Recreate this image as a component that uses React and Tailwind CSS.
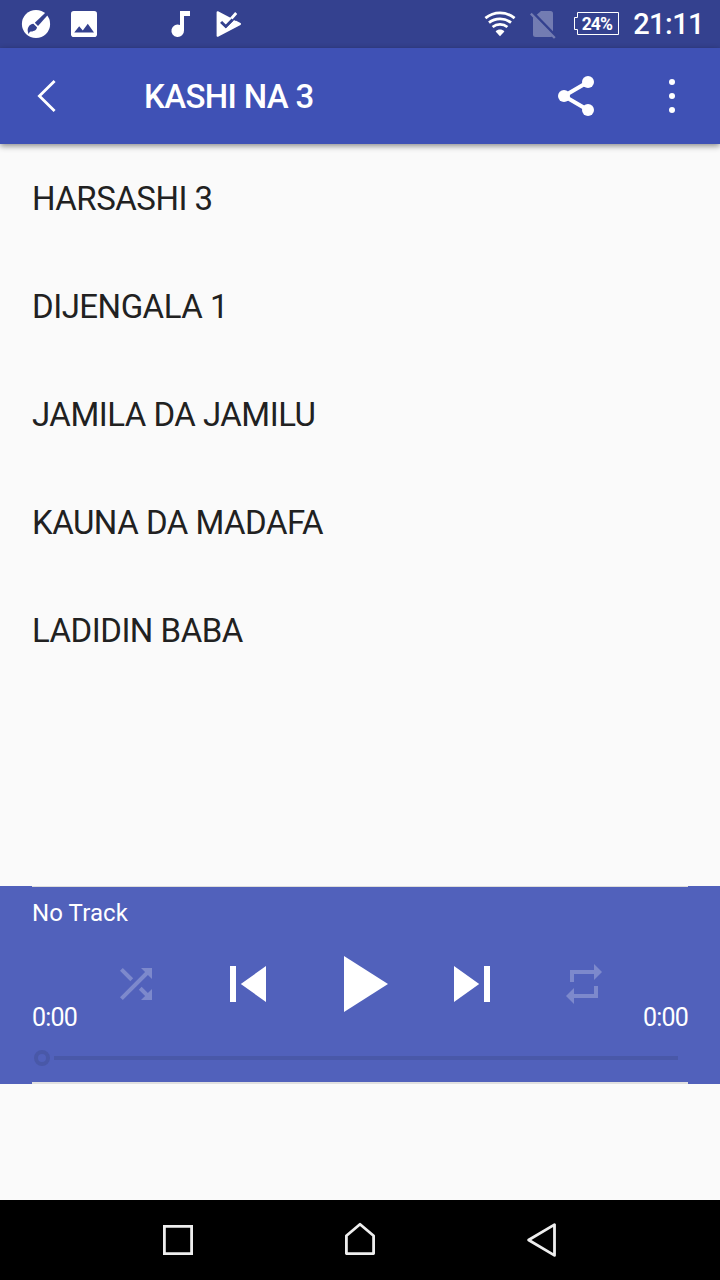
import React from "react";

const tracks = [
    "HARSASHI 3",
    "DIJENGALA 1",
    "JAMILA DA JAMILU",
    "KAUNA DA MADAFA",
    "LADIDIN BABA"
];

const StatusBar = () => {
    return (
        <div className="h-12 shrink-0 bg-[#34418f] flex items-center justify-between pl-3 pr-4 text-white">
            <div className="flex">
                <svg className="w-12 h-12" viewBox="0 0 48 48">
                    <circle cx="24" cy="24" r="14.1" fill="#fff" />
                    <path d="M33.6 12.4 22.8 22.8 26 26 36.2 14.4Z" fill="#34418f" />
                    <path d="M21.4 23.8 25 27.2C24.6 30.8 20.6 31.4 18.6 31.6 17.4 32 17.2 33.2 16.8 34.2 15.6 31.6 15.2 29.4 16.2 27.4 17.4 25.2 19.4 23.8 21.4 23.8Z" fill="#34418f" />
                    <path d="M21.8 22.8 26 27" stroke="#fff" strokeWidth="0.8" />
                </svg>
                <svg className="w-12 h-12" viewBox="0 0 48 48">
                    <rect x="11" y="11" width="26" height="26" rx="2.8" fill="#fff" />
                    <path d="M14.2 32.4 19.2 26.2 22.8 30.4 27.8 23.8 34 32.4Z" fill="#34418f" />
                </svg>
                <span className="w-12 h-12" />
                <svg className="w-12 h-12" viewBox="0 0 48 48" fill="currentColor">
                    <path d="M24 11H34V16H28V30.5A6.3 6.3 0 1 1 24 24.9Z" />
                </svg>
                <svg className="w-12 h-12" viewBox="0 0 48 48">
                    <path d="M13.6 12.2 36 24 13.6 35.8Z" fill="#fff" stroke="#fff" strokeWidth="2" strokeLinejoin="round" />
                    <path d="M25.4 16.4 30.6 11 35 15.4 31.4 21Z" fill="#34418f" />
                    <path d="M17.4 21.8 21.8 26.2 33 15" fill="none" stroke="#34418f" strokeWidth="3" />
                    <path d="M18.4 20.4 22.4 24.2 32.2 13" fill="none" stroke="#fff" strokeWidth="2.8" />
                    <path d="M17.2 22 21.8 26.4 28.6 19.6" fill="none" stroke="#34418f" strokeWidth="2.8" />
                </svg>
            </div>
            <div className="flex items-center">
                <svg className="w-8 h-12" viewBox="484 0 32 48" fill="none" stroke="currentColor" strokeWidth="2.8">
                    <path d="M485.4 18.2C494 11.2 506 11.2 514.6 18.2" />
                    <path d="M489 22.7C495.2 17.6 504.8 17.6 511 22.7" />
                    <path d="M492.6 27C496.8 23.5 503.2 23.5 507.4 27" />
                    <path d="M495.6 31.4C498 28.9 502 28.9 504.4 31.4L500 36.2Z" fill="currentColor" stroke="none" />
                </svg>
                <svg className="ml-3.5 w-7 h-12" viewBox="530 0 28 48">
                    <path d="M541 11H550.5A2.5 2.5 0 0 1 553 13.5V34.5A2.5 2.5 0 0 1 550.5 37H535.5A2.5 2.5 0 0 1 533 34.5V18Z" fill="#737cb2" />
                    <path d="M532 11.8 556 36.5" stroke="#34418f" strokeWidth="3" />
                    <path d="M530.8 13.6 554.8 38" stroke="#737cb2" strokeWidth="2.4" />
                </svg>
                <div className="relative ml-4 mb-px w-[45px] h-[23px]">
                    <svg className="absolute inset-0 w-full h-full" viewBox="0 0 45 23" fill="none" stroke="currentColor">
                        <path d="M3.5.5H44.5V22.5H3.5V17.5H.5V5.5H3.5Z" />
                    </svg>
                    <span className="absolute left-[7.5px] top-0 text-[17.5px] leading-[24px] font-bold tracking-[-0.9px]">24%</span>
                </div>
                <span className="ml-3.5 text-[29px] leading-none font-medium tracking-[-0.55px]">21:11</span>
            </div>
        </div>
    );
};

const AppBar = () => {
    return (
        <div className="relative h-24 shrink-0 bg-[#3f51b5] shadow-[0_2px_6px_rgba(0,0,0,0.45)] flex items-center text-white">
            <svg className="w-24 h-24" viewBox="0 0 96 96" fill="none" stroke="currentColor" strokeWidth="2.8">
                <path d="M53.6 34 39.4 48 53.6 62" strokeLinecap="square" />
            </svg>
            <h1 className="ml-12 flex-1 text-[33px] leading-none font-medium tracking-[-0.65px]">KASHI NA 3</h1>
            <svg className="w-24 h-24" viewBox="0 0 96 96" fill="currentColor">
                <path d="M60 34 36 48 60 62" fill="none" stroke="currentColor" strokeWidth="4" />
                <circle cx="60" cy="34" r="6" />
                <circle cx="36" cy="48" r="6" />
                <circle cx="60" cy="62" r="6" />
            </svg>
            <svg className="w-24 h-24" viewBox="0 0 96 96" fill="currentColor">
                <circle cx="48" cy="34" r="3" />
                <circle cx="48" cy="48" r="3" />
                <circle cx="48" cy="62" r="3" />
            </svg>
        </div>
    );
};

const Player = () => {
    return (
        <div className="h-[198px] shrink-0 bg-[#5161bb] px-8 text-white">
            <div className="h-full flex flex-col border-t border-b-2 border-t-[#dcdcdc] border-b-[#e0e0e0]">
                <p className="mt-[10px] text-2xl leading-8 tracking-[0.1px]">No Track</p>
                <div className="mt-[11px] h-[92px] flex items-end justify-between">
                    <span className="w-14 -mb-0.5 text-[25px] leading-8 tracking-[-0.8px]">0:00</span>
                    <div className="w-[496px] h-[88px] mb-1 flex items-center justify-between">
                        <svg className="w-12 h-12 opacity-25" viewBox="0 0 24 24" fill="currentColor">
                            <path d="M10.59 9.17 5.41 4 4 5.41l5.17 5.17 1.42-1.41zM14.5 4l2.04 2.04L4 18.59 5.41 20 17.96 7.46 20 9.5V4h-5.5zm.33 9.41-1.41 1.41 3.13 3.13L14.5 20H20v-5.5l-2.04 2.04-3.13-3.13z" />
                        </svg>
                        <div className="w-[296px] flex items-center justify-between">
                            <svg className="w-[72px] h-[72px]" viewBox="0 0 24 24" fill="currentColor">
                                <path d="M6 6h2v12H6zM9.6 12 18 18V6z" />
                            </svg>
                            <svg className="w-24 h-24" viewBox="0 0 96 96" fill="currentColor">
                                <path d="M32 20V76L76 48Z" />
                            </svg>
                            <svg className="w-[72px] h-[72px]" viewBox="0 0 24 24" fill="currentColor">
                                <path d="M6 18 14.4 12 6 6zM16 6v12h2V6z" />
                            </svg>
                        </div>
                        <svg className="w-12 h-12 opacity-25" viewBox="0 0 24 24" fill="currentColor">
                            <path d="M7 7h10v3l4-4-4-4v3H5v6h2V7zm10 10H7v-3l-4 4 4 4v-3h12v-6h-2v4z" />
                        </svg>
                    </div>
                    <span className="w-14 -mb-0.5 text-[25px] leading-8 tracking-[-0.8px] text-right">0:00</span>
                </div>
                <div className="mt-[18px] px-0.5 flex items-center">
                    <span className="w-4 h-4 rounded-full border-4 border-[#4958a8]" />
                    <span className="ml-1 mr-2 flex-1 h-1 bg-[#4958a8]" />
                </div>
            </div>
        </div>
    );
};

const NavBar = () => {
    return (
        <div className="h-20 shrink-0 bg-black px-[137px] flex items-center justify-between text-[#eeeeee]">
            <svg className="w-20 h-20" viewBox="137 1200 80 80" fill="none" stroke="currentColor" strokeWidth="2.8">
                <path d="M164.4 1226.4H191.6V1253.6H164.4Z" />
            </svg>
            <svg className="w-20 h-20" viewBox="320 1200 80 80" fill="none" stroke="currentColor" strokeWidth="2.8" strokeLinejoin="round">
                <path d="M346.4 1235.8 360 1224.2 373.6 1235.8V1253.6H346.4Z" />
            </svg>
            <svg className="w-20 h-20" viewBox="503 1200 80 80" fill="none" stroke="currentColor" strokeWidth="2.8" strokeLinejoin="round">
                <path d="M554.5 1224.6V1255.4L528.6 1240Z" />
            </svg>
        </div>
    );
};

const App = () => {
    return (
        <div className="w-[720px] h-[1280px] overflow-hidden flex flex-col bg-[#fafafa] font-['Roboto',sans-serif]">
            <StatusBar />
            <AppBar />
            <ul className="flex-1 text-[#212121]">
                {tracks.map((track) => (
                    <li key={track} className="h-[108px] px-8 flex items-center text-[33px] leading-none tracking-[-0.5px]">
                        {track}
                    </li>
                ))}
            </ul>
            <Player />
            <div className="h-[116px] shrink-0" />
            <NavBar />
        </div>
    );
};

export default App;
